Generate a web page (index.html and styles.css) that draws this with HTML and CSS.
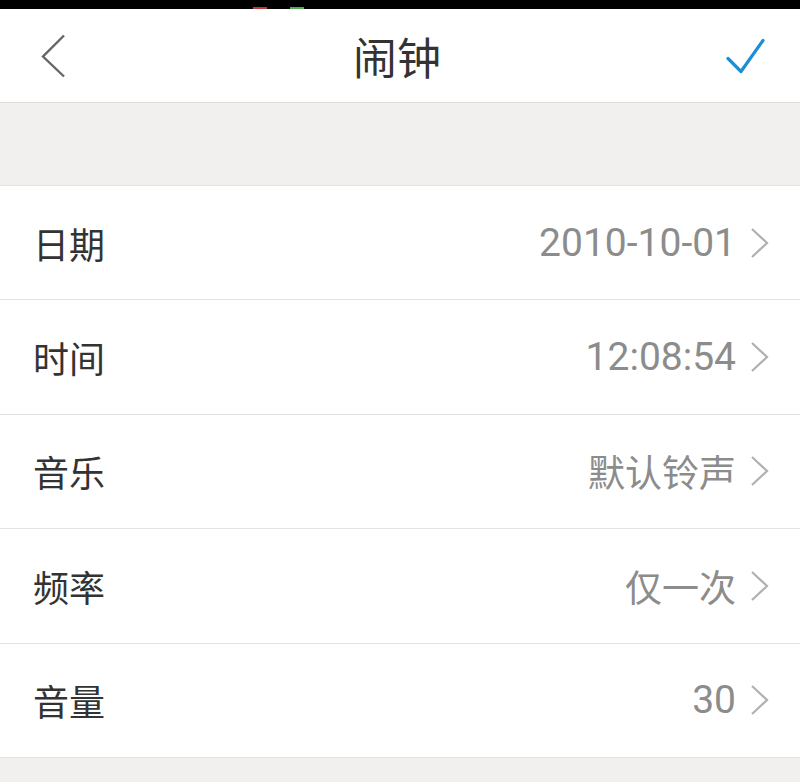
FILE: index.html
```html
<!DOCTYPE html>
<html lang="zh-CN">
<head>
    <meta charset="UTF-8">
    <meta name="viewport" content="width=device-width, initial-scale=1.0">
    <title>闹钟</title>
    <link rel="stylesheet" href="styles.css">
</head>
<body>

<div class="status-bar">
    <span class="status-dot dot-red"></span>
    <span class="status-dot dot-green"></span>
</div>

<header class="nav-bar">
    <svg class="nav-back" width="30" height="48" viewBox="0 0 30 48">
        <path d="M26 3.5 L5 24.5 L26 44.5" fill="none" stroke="#666" stroke-width="2.4"/>
    </svg>
    <h1 class="nav-title">闹钟</h1>
    <svg class="nav-ok" width="44" height="40" viewBox="0 0 44 40">
        <path d="M2 22.5 L15 35.5 L37 4.5" fill="none" stroke="#1b8fd6" stroke-width="3.2" stroke-linecap="round" stroke-linejoin="round"/>
    </svg>
</header>

<div class="spacer"></div>

<main class="list">
    <div class="row">
        <span class="row-label">日期</span>
        <span class="row-value num">2010-10-01</span>
        <svg class="row-arrow" width="20" height="32" viewBox="0 0 20 32"><path d="M2 2 L17 16 L2 30" fill="none" stroke="#b0b0b0" stroke-width="2.2"/></svg>
    </div>
    <div class="row">
        <span class="row-label">时间</span>
        <span class="row-value num">12:08:54</span>
        <svg class="row-arrow" width="20" height="32" viewBox="0 0 20 32"><path d="M2 2 L17 16 L2 30" fill="none" stroke="#b0b0b0" stroke-width="2.2"/></svg>
    </div>
    <div class="row">
        <span class="row-label">音乐</span>
        <span class="row-value">默认铃声</span>
        <svg class="row-arrow" width="20" height="32" viewBox="0 0 20 32"><path d="M2 2 L17 16 L2 30" fill="none" stroke="#b0b0b0" stroke-width="2.2"/></svg>
    </div>
    <div class="row">
        <span class="row-label">频率</span>
        <span class="row-value">仅一次</span>
        <svg class="row-arrow" width="20" height="32" viewBox="0 0 20 32"><path d="M2 2 L17 16 L2 30" fill="none" stroke="#b0b0b0" stroke-width="2.2"/></svg>
    </div>
    <div class="row">
        <span class="row-label">音量</span>
        <span class="row-value num">30</span>
        <svg class="row-arrow" width="20" height="32" viewBox="0 0 20 32"><path d="M2 2 L17 16 L2 30" fill="none" stroke="#b0b0b0" stroke-width="2.2"/></svg>
    </div>
</main>

</body>
</html>
```

FILE: styles.css
```css
body {
    font-family: "Noto Sans CJK SC", sans-serif;
    background-color: #f1f0ee;
    margin: 0;
    padding: 0;
}
.status-bar {
    height: 9px;
    background-color: #000;
    display: flex;
    align-items: flex-end;
}
.status-dot {
    height: 2px;
    width: 14px;
}
.dot-red {
    background-color: #c0363b;
    margin-left: 253px;
}
.dot-green {
    background-color: #4caf50;
    margin-left: 23px;
}
.nav-bar {
    height: 93px;
    background-color: #fff;
    border-bottom: 1px solid #dcdcdc;
    display: flex;
    align-items: center;
    justify-content: space-between;
    padding: 0 30px 0 38px;
}
.nav-title {
    margin: 0;
    font-size: 44px;
    font-weight: normal;
    color: #333;
}
.spacer {
    height: 82px;
}
.list {
    background-color: #fff;
    border-top: 1px solid #e3e3e3;
}
.row {
    height: 113.4px;
    border-bottom: 1px solid #e3e3e3;
    display: flex;
    align-items: center;
    padding: 0 30px 0 33px;
}
.row-label {
    font-size: 36px;
    color: #333;
    flex: 1;
}
.row-value {
    font-size: 37px;
    color: #8c8c8c;
    margin-right: 14px;
}
.row-value.num {
    font-family: Roboto, "Noto Sans CJK SC", sans-serif;
    font-size: 39px;
}
```
